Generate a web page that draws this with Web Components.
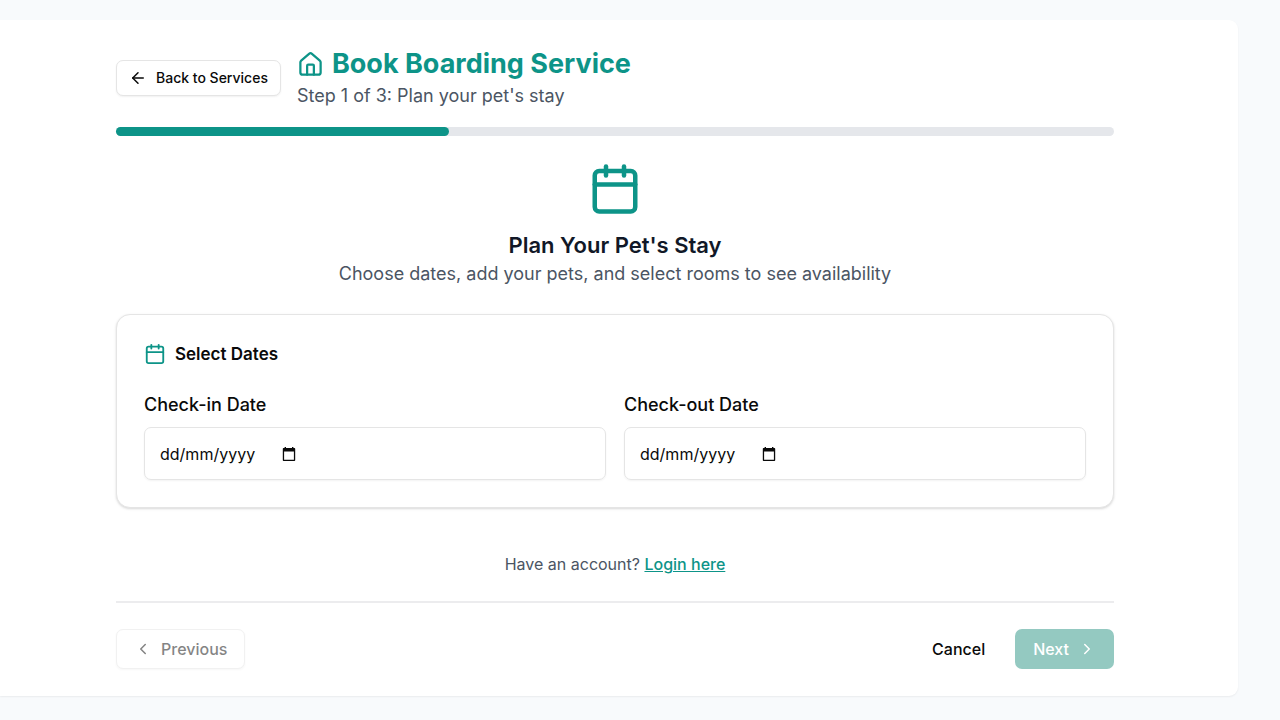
<!DOCTYPE html>
<html lang="en">
<head>
<meta charset="utf-8">
<title>Book Boarding Service</title>
<style>
  body {
    margin: 0;
    background: #f8fafc;
    color: #0a0a0a;
    font-family: Inter, "Liberation Sans", sans-serif;
    font-size: 16px;
  }
</style>
</head>
<body>
<booking-page></booking-page>

<script>
const ICONS = {
  arrow: '<path d="m12 19-7-7 7-7"/><path d="M19 12H5"/>',
  house: '<path d="M15 21v-8a1 1 0 0 0-1-1h-4a1 1 0 0 0-1 1v8"/><path d="M3 10a2 2 0 0 1 .709-1.528l7-5.999a2 2 0 0 1 2.582 0l7 5.999A2 2 0 0 1 21 10v9a2 2 0 0 1-2 2H5a2 2 0 0 1-2-2z"/>',
  calendar: '<path d="M8 2v4"/><path d="M16 2v4"/><rect width="18" height="18" x="3" y="4" rx="2"/><path d="M3 10h18"/>',
  left: '<path d="m15 18-6-6 6-6"/>',
  right: '<path d="m9 18 6-6-6-6"/>',
};

class UiIcon extends HTMLElement {
  constructor() {
    super();
    this.attachShadow({ mode: "open" });
  }

  connectedCallback() {
    this.shadowRoot.innerHTML = `
      <style>
        :host { display: block; flex: none; width: 18px; height: 18px; }
        svg { display: block; width: 100%; height: 100%; }
      </style>
      <svg viewBox="0 0 24 24" fill="none" stroke="currentColor" stroke-width="2"
        stroke-linecap="round" stroke-linejoin="round" aria-hidden="true">${ICONS[this.getAttribute("name")]}</svg>
    `;
  }
}

class UiButton extends HTMLElement {
  constructor() {
    super();
    this.attachShadow({ mode: "open" });
  }

  connectedCallback() {
    const disabled = this.hasAttribute("disabled") ? "disabled" : "";
    this.shadowRoot.innerHTML = `
      <style>
        :host { display: block; flex: none; }
        button {
          display: flex;
          align-items: center;
          box-sizing: border-box;
          gap: 9px;
          height: 40px;
          padding: 0 17px;
          border: 1px solid transparent;
          border-radius: 7px;
          background: transparent;
          color: #0a0a0a;
          font: 500 16px/24px Inter, "Liberation Sans", sans-serif;
          cursor: pointer;
        }
        button:disabled { cursor: default; }
        :host([variant="outline"]) button {
          border-color: #e5e5e5;
          background: #fff;
          box-shadow: 0 1px 2px rgba(0, 0, 0, 0.06);
        }
        :host([variant="outline"]) button:disabled { opacity: 0.5; }
        :host([variant="primary"]) button { background: #0d9488; color: #fff; }
        :host([variant="primary"]) button:disabled { background: #94c9c1; }
        :host([size="small"]) button {
          height: 36px;
          padding: 0 12px;
          font-size: 14px;
          line-height: 20px;
        }
      </style>
      <button type="button" ${disabled}>
        <slot name="before"></slot><slot></slot><slot name="after"></slot>
      </button>
    `;
  }
}

class BookingHeader extends HTMLElement {
  constructor() {
    super();
    this.attachShadow({ mode: "open" });
  }

  connectedCallback() {
    this.shadowRoot.innerHTML = `
      <style>
        :host { display: flex; align-items: center; gap: 16px; }
        h1 {
          display: flex;
          align-items: center;
          gap: 8px;
          margin: 0;
          color: #0d9488;
          font-size: 27px;
          line-height: 36px;
          font-weight: 700;
        }
        h1 ui-icon { width: 27px; height: 27px; }
        p { margin: 0; color: #4b5563; font-size: 18px; line-height: 28px; }
      </style>
      <ui-button variant="outline" size="small"><ui-icon name="arrow" slot="before"></ui-icon>Back to Services</ui-button>
      <div>
        <h1><ui-icon name="house"></ui-icon><slot name="title"></slot></h1>
        <p><slot name="step"></slot></p>
      </div>
    `;
  }
}

class StepProgress extends HTMLElement {
  constructor() {
    super();
    this.attachShadow({ mode: "open" });
  }

  connectedCallback() {
    const step = Number(this.getAttribute("step"));
    const total = Number(this.getAttribute("total"));
    this.setAttribute("role", "progressbar");
    this.setAttribute("aria-label", "Booking progress");
    this.setAttribute("aria-valuenow", step);
    this.setAttribute("aria-valuemax", total);
    this.shadowRoot.innerHTML = `
      <style>
        :host { display: block; height: 9px; border-radius: 5px; background: #e5e7eb; }
        div { width: ${(step / total) * 100}%; height: 100%; border-radius: 5px; background: #0d9488; }
      </style>
      <div></div>
    `;
  }
}

class StepIntro extends HTMLElement {
  constructor() {
    super();
    this.attachShadow({ mode: "open" });
  }

  connectedCallback() {
    this.shadowRoot.innerHTML = `
      <style>
        :host { display: flex; flex-direction: column; align-items: center; text-align: center; }
        ui-icon { width: 54px; height: 54px; margin-bottom: 14px; color: #0d9488; }
        h2 { margin: 0; color: #111827; font-size: 22px; line-height: 30px; font-weight: 600; }
        p { margin: 0; color: #4b5563; font-size: 18px; line-height: 28px; }
      </style>
      <ui-icon name="calendar"></ui-icon>
      <h2><slot name="title"></slot></h2>
      <p><slot></slot></p>
    `;
  }
}

class DateField extends HTMLElement {
  constructor() {
    super();
    this.attachShadow({ mode: "open" });
  }

  connectedCallback() {
    this.shadowRoot.innerHTML = `
      <style>
        :host { display: block; min-width: 0; }
        label { display: block; margin-bottom: 8px; font-size: 18px; line-height: 28px; font-weight: 500; }
        .box {
          display: flex;
          align-items: center;
          box-sizing: border-box;
          height: 53px;
          padding: 0 15px;
          border: 1px solid #e5e5e5;
          border-radius: 7px;
          box-shadow: 0 1px 2px rgba(0, 0, 0, 0.05);
        }
        input {
          width: 122px;
          padding: 0;
          border: 0;
          outline: 0;
          background: transparent;
          color: #0a0a0a;
          font: 400 16px/24px Inter, "Liberation Sans", sans-serif;
        }
        input::placeholder { color: #0a0a0a; opacity: 1; }
        button { display: flex; padding: 0; border: 0; background: transparent; color: #0a0a0a; cursor: pointer; }
        svg { display: block; width: 14px; height: 14px; }
      </style>
      <label for="date"><slot></slot></label>
      <div class="box">
        <input id="date" type="text" inputmode="numeric" placeholder="dd/mm/yyyy">
        <button type="button" aria-label="Open calendar">
          <svg viewBox="0 0 14 14" fill="currentColor"><path fill-rule="evenodd" d="M2.600 0h1.400v1h6V0h1.400v1h.8c.6 0 1 .4 1 1v11c0 .6-.4 1-1 1H1.800c-.6 0-1-.4-1-1V2c0-.6.4-1 1-1h.8zM2.100 4.500v8.200h9.800V4.500z"/></svg>
        </button>
      </div>
    `;
  }
}

class DatesCard extends HTMLElement {
  constructor() {
    super();
    this.attachShadow({ mode: "open" });
  }

  connectedCallback() {
    this.shadowRoot.innerHTML = `
      <style>
        :host {
          display: block;
          padding: 25px 27px 27px;
          border: 1px solid #e5e5e5;
          border-radius: 14px;
          background: #fff;
          box-shadow: 0 1px 3px rgba(0, 0, 0, 0.1), 0 1px 2px rgba(0, 0, 0, 0.06);
        }
        h3 {
          display: flex;
          align-items: center;
          gap: 9px;
          margin: 0 0 23px;
          font-size: 17px;
          line-height: 28px;
          font-weight: 600;
        }
        ui-icon { width: 22px; height: 22px; color: #0d9488; }
        .fields { display: grid; grid-template-columns: 1fr 1fr; gap: 18px; }
      </style>
      <h3><ui-icon name="calendar"></ui-icon>Select Dates</h3>
      <div class="fields"><slot></slot></div>
    `;
  }
}

class BookingFooter extends HTMLElement {
  constructor() {
    super();
    this.attachShadow({ mode: "open" });
  }

  connectedCallback() {
    this.shadowRoot.innerHTML = `
      <style>
        :host {
          display: flex;
          align-items: center;
          justify-content: space-between;
          padding-top: 26px;
          border-top: 2px solid #ececee;
        }
        div { display: flex; gap: 12px; }
      </style>
      <ui-button variant="outline" disabled><ui-icon name="left" slot="before"></ui-icon>Previous</ui-button>
      <div>
        <ui-button>Cancel</ui-button>
        <ui-button variant="primary" disabled>Next<ui-icon name="right" slot="after"></ui-icon></ui-button>
      </div>
    `;
  }
}

class BookingPage extends HTMLElement {
  constructor() {
    super();
    this.attachShadow({ mode: "open" });
  }

  connectedCallback() {
    this.shadowRoot.innerHTML = `
      <style>
        :host { display: block; padding: 20px 42px 24px 0; }
        main {
          padding: 26px 124px 27px 116px;
          border-radius: 0 9px 9px 0;
          background: #fff;
          box-shadow: 0 1px 2px rgba(0, 0, 0, 0.06);
        }
        step-progress { margin: 17px 0 26px; }
        dates-card { margin: 26px 0 42px; }
        .account { margin: 0 0 23px; color: #4b5563; font-size: 16px; line-height: 28px; text-align: center; }
        a { color: #0d9488; font-weight: 500; text-decoration: underline; }
      </style>
      <main>
        <booking-header>
          <span slot="title">Book Boarding Service</span>
          <span slot="step">Step 1 of 3: Plan your pet's stay</span>
        </booking-header>
        <step-progress step="1" total="3"></step-progress>
        <step-intro>
          <span slot="title">Plan Your Pet's Stay</span>
          Choose dates, add your pets, and select rooms to see availability
        </step-intro>
        <dates-card>
          <date-field>Check-in Date</date-field>
          <date-field>Check-out Date</date-field>
        </dates-card>
        <p class="account">Have an account? <a href="#login">Login here</a></p>
        <booking-footer></booking-footer>
      </main>
    `;
  }
}

customElements.define("ui-icon", UiIcon);
customElements.define("ui-button", UiButton);
customElements.define("booking-header", BookingHeader);
customElements.define("step-progress", StepProgress);
customElements.define("step-intro", StepIntro);
customElements.define("date-field", DateField);
customElements.define("dates-card", DatesCard);
customElements.define("booking-footer", BookingFooter);
customElements.define("booking-page", BookingPage);
</script>
</body>
</html>
